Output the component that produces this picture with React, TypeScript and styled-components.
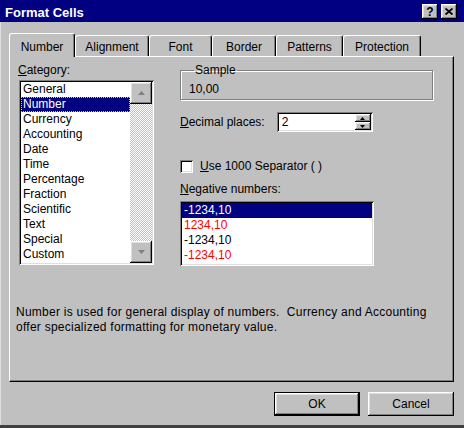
import React from 'react';
import styled, { createGlobalStyle } from 'styled-components';

const GlobalStyle = createGlobalStyle`
  html, body {
    margin: 0;
    padding: 0;
    background: #c0c0c0;
  }
  body {
    font-family: "Liberation Sans", Arial, sans-serif;
    font-size: 12px;
    color: #000;
  }
`;

const raised = `
  box-shadow: inset -1px -1px #000, inset 1px 1px #fff,
    inset -2px -2px #808080, inset 2px 2px #dfdfdf;
`;

const sunken = `
  box-shadow: inset 1px 1px #808080, inset -1px -1px #fff,
    inset 2px 2px #000, inset -2px -2px #dfdfdf;
`;

const Window = styled.div`
  width: 464px;
  height: 428px;
  box-sizing: border-box;
  background: #c0c0c0;
  border-bottom: 3px solid #404040;
  display: flex;
  flex-direction: column;
`;

const TitleBar = styled.div`
  height: 22px;
  flex-shrink: 0;
  background: #000080;
  display: flex;
  align-items: center;
  padding: 0 7px 0 5px;
`;

const TitleText = styled.div`
  flex: 1;
  color: #fff;
  font-weight: bold;
  font-size: 13px;
  line-height: 16px;
  padding-top: 3px;
`;

const TitleButtons = styled.div`
  display: flex;
  gap: 3px;
  margin-top: 1px;
`;

const TitleButton = styled.div`
  width: 16px;
  height: 15px;
  box-sizing: border-box;
  background: #c0c0c0;
  ${raised}
  display: flex;
  align-items: center;
  justify-content: center;
  font-weight: bold;
  font-size: 12px;
  line-height: 12px;
`;

const Body = styled.div`
  flex: 1;
  border-left: 1px solid #dfdfdf;
  padding: 11px 10px 0 8px;
  display: flex;
  flex-direction: column;
`;

const TabStrip = styled.div`
  display: flex;
  align-items: flex-end;
  height: 23px;
  position: relative;
  z-index: 1;
`;

const Tab = styled.div<{ $w: number; $active?: boolean }>`
  width: ${p => p.$w}px;
  height: ${p => (p.$active ? 24 : 21)}px;
  margin-bottom: ${p => (p.$active ? -1 : 0)}px;
  padding-top: ${p => (p.$active ? 6 : 4)}px;
  box-sizing: border-box;
  background: #c0c0c0;
  border-top: 1px solid #fff;
  border-left: 1px solid #fff;
  border-right: 1px solid #000;
  border-radius: 3px 3px 0 0;
  box-shadow: inset -1px 0 #808080;
  text-align: center;
  line-height: 15px;
`;

const Panel = styled.div`
  width: 445px;
  height: 326px;
  box-sizing: border-box;
  border-top: 1px solid #fff;
  border-left: 1px solid #fff;
  border-right: 1px solid #000;
  border-bottom: 1px solid #000;
  box-shadow: inset -1px -1px #808080;
  padding: 6px 0 0 6px;
  display: flex;
  flex-direction: column;
`;

const TopRow = styled.div`
  display: flex;
  padding-left: 2px;
`;

const LeftCol = styled.div`
  width: 136px;
  display: flex;
  flex-direction: column;
`;

const RightCol = styled.div`
  margin-left: 26px;
  display: flex;
  flex-direction: column;
`;

const Label = styled.div`
  line-height: 15px;
  white-space: nowrap;
`;

const Key = styled.span`
  text-decoration: underline;
`;

const ListBox = styled.div<{ $w: number; $h: number }>`
  width: ${p => p.$w}px;
  height: ${p => p.$h}px;
  box-sizing: border-box;
  padding: 2px;
  background: #fff;
  ${sunken}
  display: flex;
`;

const Items = styled.div`
  flex: 1;
  display: flex;
  flex-direction: column;
`;

const Item = styled.div<{ $selected?: boolean; $red?: boolean; $focus?: boolean }>`
  height: 15px;
  line-height: 15px;
  padding-left: 2px;
  white-space: nowrap;
  background: ${p => (p.$selected ? '#000080' : 'transparent')};
  color: ${p => (p.$selected ? '#fff' : p.$red ? '#ff0000' : '#000')};
  outline: ${p => (p.$focus ? '1px dotted #c0c0c0' : 'none')};
  outline-offset: -1px;
`;

const ScrollBar = styled.div`
  width: 22px;
  display: flex;
  flex-direction: column;
  background: repeating-conic-gradient(#c0c0c0 0 25%, #fff 0 50%) 0 0 / 2px 2px;
`;

const ScrollButton = styled.div`
  height: 22px;
  background: #c0c0c0;
  ${raised}
  display: flex;
  align-items: center;
  justify-content: center;
`;

const Track = styled.div`
  flex: 1;
`;

const Sample = styled.fieldset`
  width: 253px;
  box-sizing: border-box;
  margin: 0;
  padding: 4px 0 2px 8px;
  border: 1px solid #808080;
  box-shadow: inset 1px 1px #fff, 1px 1px #fff;
  min-inline-size: 0;
`;

const Legend = styled.legend`
  padding: 0 1px;
  margin-left: 5px;
  line-height: 15px;
`;

const SampleValue = styled.div`
  line-height: 15px;
`;

const DecimalRow = styled.div`
  margin-top: 12px;
  display: flex;
  align-items: center;
  height: 20px;
`;

const SpinBox = styled.div`
  width: 96px;
  height: 20px;
  box-sizing: border-box;
  padding: 2px;
  background: #fff;
  ${sunken}
  display: flex;
  margin-left: 12px;
`;

const SpinText = styled.div`
  flex: 1;
  padding-left: 3px;
  line-height: 16px;
`;

const SpinButtons = styled.div`
  width: 16px;
  display: flex;
  flex-direction: column;
`;

const SpinButton = styled.div`
  flex: 1;
  background: #c0c0c0;
  ${raised}
  display: flex;
  align-items: center;
  justify-content: center;
`;

const CheckRow = styled.div`
  margin-top: 27px;
  display: flex;
  align-items: center;
  height: 15px;
  gap: 7px;
`;

const CheckBox = styled.div`
  width: 13px;
  height: 13px;
  box-sizing: border-box;
  background: #fff;
  ${sunken}
`;

const NegLabel = styled(Label)`
  margin-top: 8px;
`;

const Description = styled.div`
  margin-top: 39px;
  width: 418px;
  line-height: 15px;
  letter-spacing: 0.25px;
  white-space: pre-wrap;
`;

const ButtonRow = styled.div`
  margin-top: 10px;
  display: flex;
  justify-content: flex-end;
  gap: 8px;
`;

const Button = styled.div<{ $default?: boolean }>`
  width: 86px;
  height: 24px;
  box-sizing: border-box;
  background: #c0c0c0;
  display: flex;
  align-items: center;
  justify-content: center;
  border: ${p => (p.$default ? '1px solid #000' : 'none')};
  ${raised}
`;

const Arrow = ({ up, color }: { up: boolean; color: string }) => (
  <svg width="7" height="4" viewBox="0 0 7 4">
    <polygon points={up ? '3.5,0 7,4 0,4' : '0,0 7,0 3.5,4'} fill={color} />
  </svg>
);

const SmallArrow = ({ up }: { up: boolean }) => (
  <svg width="5" height="3" viewBox="0 0 5 3">
    <polygon points={up ? '2.5,0 5,3 0,3' : '0,0 5,0 2.5,3'} fill="#000" />
  </svg>
);

const categories = [
  'General', 'Number', 'Currency', 'Accounting', 'Date', 'Time',
  'Percentage', 'Fraction', 'Scientific', 'Text', 'Special', 'Custom',
];

const negatives = [
  { text: '-1234,10', red: false },
  { text: '1234,10', red: true },
  { text: '-1234,10', red: false },
  { text: '-1234,10', red: true },
];

const tabs = [
  { label: 'Number', w: 66 },
  { label: 'Alignment', w: 74 },
  { label: 'Font', w: 63 },
  { label: 'Border', w: 64 },
  { label: 'Patterns', w: 67 },
  { label: 'Protection', w: 78 },
];

const App: React.FC = () => {
  return (
    <Window>
      <GlobalStyle />
      <TitleBar>
        <TitleText>Format Cells</TitleText>
        <TitleButtons>
          <TitleButton>?</TitleButton>
          <TitleButton>
            <svg width="8" height="7" viewBox="0 0 8 7">
              <path d="M0.5 0.5 L7.5 6.5 M7.5 0.5 L0.5 6.5" stroke="#000" strokeWidth="1.8" />
            </svg>
          </TitleButton>
        </TitleButtons>
      </TitleBar>

      <Body>
        <TabStrip>
          {tabs.map((t, i) => (
            <Tab key={t.label} $w={t.w} $active={i === 0}>
              {t.label}
            </Tab>
          ))}
        </TabStrip>

        <Panel>
          <TopRow>
            <LeftCol>
              <Label><Key>C</Key>ategory:</Label>
              <ListBox $w={135} $h={185} style={{ marginTop: 2, marginLeft: 1 }}>
                <Items>
                  {categories.map(c => (
                    <Item key={c} $selected={c === 'Number'} $focus={c === 'Number'}>
                      {c}
                    </Item>
                  ))}
                </Items>
                <ScrollBar>
                  <ScrollButton><Arrow up color="#808080" /></ScrollButton>
                  <Track />
                  <ScrollButton><Arrow up={false} color="#808080" /></ScrollButton>
                </ScrollBar>
              </ListBox>
            </LeftCol>

            <RightCol>
              <Sample>
                <Legend>Sample</Legend>
                <SampleValue>10,00</SampleValue>
              </Sample>

              <DecimalRow>
                <Label><Key>D</Key>ecimal places:</Label>
                <SpinBox>
                  <SpinText>2</SpinText>
                  <SpinButtons>
                    <SpinButton><SmallArrow up /></SpinButton>
                    <SpinButton><SmallArrow up={false} /></SpinButton>
                  </SpinButtons>
                </SpinBox>
              </DecimalRow>

              <CheckRow>
                <CheckBox />
                <Label><Key>U</Key>se 1000 Separator ( )</Label>
              </CheckRow>

              <NegLabel><Key>N</Key>egative numbers:</NegLabel>
              <ListBox $w={194} $h={65} style={{ marginTop: 4 }}>
                <Items>
                  {negatives.map((n, i) => (
                    <Item key={i} $selected={i === 0} $red={n.red}>
                      {n.text}
                    </Item>
                  ))}
                </Items>
              </ListBox>
            </RightCol>
          </TopRow>

          <Description>
            {'Number is used for general display of numbers.  Currency and Accounting offer specialized formatting for monetary value.'}
          </Description>
        </Panel>

        <ButtonRow>
          <Button $default>OK</Button>
          <Button>Cancel</Button>
        </ButtonRow>
      </Body>
    </Window>
  );
};

export default App;
